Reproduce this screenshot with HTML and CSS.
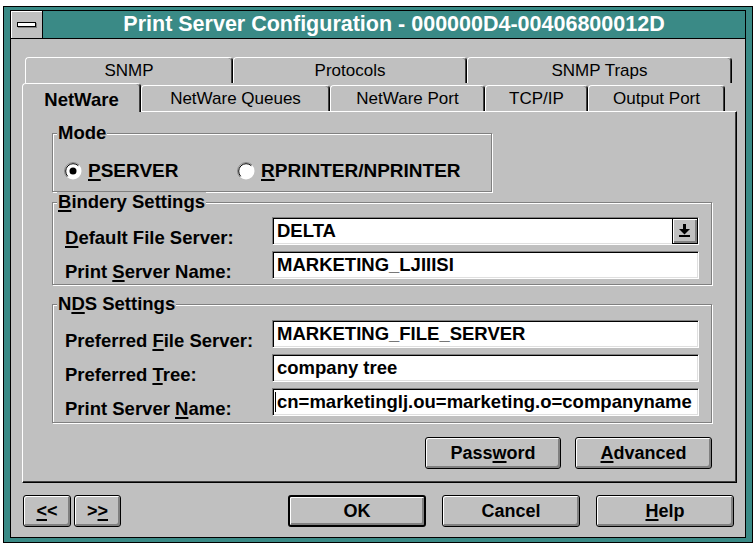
FILE: index.html
```
<!DOCTYPE html>
<html lang="en">

<head>
    <meta charset="UTF-8">
    <title>Print Server Configuration</title>
    <link rel="stylesheet" href="styles.css">
</head>

<body>
    <div class="window">
        <div class="titlebar">
            <div class="sysmenu"><span class="sysbar"></span></div>
            <div class="caption">Print Server Configuration - 000000D4-00406800012D</div>
        </div>

        <div class="client">
            <div class="tabs-back">
                <div class="tab t-snmp">SNMP</div>
                <div class="tab t-proto">Protocols</div>
                <div class="tab t-traps">SNMP Traps</div>
            </div>
            <div class="tabs-front">
                <div class="tab active t-netware">NetWare</div>
                <div class="tab t-queues">NetWare Queues</div>
                <div class="tab t-port">NetWare Port</div>
                <div class="tab t-tcp">TCP/IP</div>
                <div class="tab t-output">Output Port</div>
            </div>

            <div class="panel">
                <div class="group mode">
                    <div class="legend">Mode</div>
                    <div class="radios">
                        <div class="radio first">
                            <svg class="rb" viewBox="0 0 18 18"><circle cx="9" cy="9" r="8.5" fill="#fff"/><path d="M2.99 15.01 A8.5 8.5 0 0 1 15.01 2.99" fill="none" stroke="#808080"/><path d="M3.7 14.3 A7.5 7.5 0 0 1 14.3 3.7" fill="none" stroke="#000"/><circle cx="9" cy="9" r="3.5" fill="#000"/></svg>
                            <span><u>P</u>SERVER</span>
                        </div>
                        <div class="radio">
                            <svg class="rb" viewBox="0 0 18 18"><circle cx="9" cy="9" r="8.5" fill="#fff"/><path d="M2.99 15.01 A8.5 8.5 0 0 1 15.01 2.99" fill="none" stroke="#808080"/><path d="M3.7 14.3 A7.5 7.5 0 0 1 14.3 3.7" fill="none" stroke="#000"/></svg>
                            <span><u>R</u>PRINTER/NPRINTER</span>
                        </div>
                    </div>
                </div>

                <div class="group bindery">
                    <div class="legend"><u>B</u>indery Settings</div>
                    <div class="rows">
                        <div class="lbl"><u>D</u>efault File Server:</div>
                        <div class="field combo">
                            <span>DELTA</span>
                            <span class="drop"><svg width="11" height="13" viewBox="0 0 11 13"><rect x="4" y="0" width="3" height="5"/><path d="M0 5 H11 L5.5 10.5 Z"/><rect x="0" y="11" width="11" height="2"/></svg></span>
                        </div>
                        <div class="lbl">Print <u>S</u>erver Name:</div>
                        <div class="field">MARKETING_LJIIISI</div>
                    </div>
                </div>

                <div class="group nds">
                    <div class="legend">N<u>D</u>S Settings</div>
                    <div class="rows">
                        <div class="lbl">Preferred <u>F</u>ile Server:</div>
                        <div class="field">MARKETING_FILE_SERVER</div>
                        <div class="lbl">Preferred <u>T</u>ree:</div>
                        <div class="field">company tree</div>
                        <div class="lbl">Print Server <u>N</u>ame:</div>
                        <div class="field focus"><span class="caret"></span>cn=marketinglj.ou=marketing.o=companyname</div>
                    </div>
                </div>

                <div class="page-buttons">
                    <div class="btn b-pass">Pass<u>w</u>ord</div>
                    <div class="btn b-adv"><u>A</u>dvanced</div>
                </div>
            </div>

            <div class="footer">
                <div class="nav">
                    <div class="btn b-prev"><u>&lt;</u>&lt;</div>
                    <div class="btn b-next">&gt;<u>&gt;</u></div>
                </div>
                <div class="actions">
                    <div class="btn default">OK</div>
                    <div class="btn">Cancel</div>
                    <div class="btn"><u>H</u>elp</div>
                </div>
            </div>
        </div>
    </div>
</body>

</html>
```

FILE: styles.css
```
* {
    margin: 0;
    padding: 0;
    box-sizing: border-box;
}

body {
    background: #fff;
    font-family: "Liberation Sans", Arial, sans-serif;
    color: #000;
}

u {
    text-decoration-thickness: 2px;
    text-underline-offset: 2px;
}

.window {
    margin: 6px 0 0 3px;
    width: 750px;
    height: 537px;
    border: 1px solid #000;
    background: #3a8a86;
    padding: 3px 6px 4px 6px;
}

.titlebar {
    display: flex;
    height: 29px;
    border: 1px solid #000;
    background: #3a8a86;
}

.sysmenu {
    width: 32px;
    border-right: 1px solid #000;
    background: #c0c0c0;
    box-shadow: inset 1px 1px #fff;
    display: flex;
    align-items: center;
    justify-content: center;
}

.sysbar {
    width: 19px;
    height: 5px;
    border: 1px solid #000;
    background: #fff;
    box-shadow: 1px 1px #808080;
}

.caption {
    flex: 1;
    color: #fff;
    font-weight: bold;
    font-size: 21.5px;
    line-height: 27px;
    text-align: center;
}

.client {
    height: 499px;
    background: #c0c0c0;
    border: 1px solid #000;
    border-top: 0;
    padding-top: 18px;
}

/* tabs */

.tabs-back {
    display: flex;
    margin-left: 14px;
    height: 26px;
}

.tabs-front {
    display: flex;
    align-items: flex-end;
    margin-left: 11px;
    height: 28px;
}

.tab {
    height: 26px;
    border-top: 1px solid #fff;
    border-left: 1px solid #fff;
    border-right: 1px solid #000;
    box-shadow: inset -1px 0 #404040;
    border-radius: 4px 4px 0 0;
    background: #c0c0c0;
    font-size: 17px;
    display: flex;
    align-items: center;
    justify-content: center;
}

.tab.active {
    height: 29px;
    margin-bottom: -1px;
    padding-top: 3px;
    position: relative;
    z-index: 1;
    font-weight: bold;
    font-size: 18.5px;
}

.t-snmp { width: 208px; }
.t-proto { width: 234px; }
.t-traps { width: 265px; }
.t-netware { width: 119px; }
.t-queues { width: 189px; }
.t-port { width: 155px; }
.t-tcp { width: 103px; }
.t-output { width: 137px; }

.panel {
    margin-left: 11px;
    width: 715px;
    height: 372px;
    border-top: 1px solid #fff;
    border-left: 1px solid #fff;
    border-right: 1px solid #000;
    border-bottom: 1px solid #000;
    box-shadow: inset -1px -1px #404040;
    padding: 21px 0 0 29px;
}

/* group boxes */

.group {
    width: 660px;
    border: 1px solid #808080;
    box-shadow: inset 1px 1px #fff, 1px 1px #fff;
    padding: 0 12px 0 4px;
    font-weight: bold;
    font-size: 18.5px;
}

.legend {
    width: fit-content;
    margin-top: -11px;
    padding: 0 1px;
    line-height: 20px;
    background: #c0c0c0;
}

.mode {
    width: 440px;
    padding-bottom: 9px;
}

.bindery {
    margin-top: 10px;
    padding-bottom: 5px;
}

.bindery .rows {
    margin-top: 5px;
}

.nds {
    margin-top: 19px;
    padding-bottom: 6px;
}

.nds .rows {
    margin-top: 6px;
}

.radios {
    display: flex;
    margin: 17px 0 0 7px;
    height: 22px;
    align-items: center;
}

.radio {
    display: flex;
    align-items: center;
    gap: 6px;
    font-size: 19px;
}

.radio.first {
    width: 173px;
}

.rb {
    width: 18px;
    height: 18px;
}

.rows {
    display: grid;
    grid-template-columns: 207px 427px;
    row-gap: 6px;
    margin-left: 8px;
}

.lbl {
    height: 28px;
    padding-top: 11px;
    line-height: 20px;
    white-space: nowrap;
}

.field {
    height: 28px;
    background: #fff;
    border: 1px solid;
    border-color: #808080 #fff #fff #808080;
    box-shadow: inset 1px 1px #000, inset -1px -1px #dfdfdf;
    padding-left: 4px;
    display: flex;
    align-items: center;
    white-space: nowrap;
}

.field.focus {
    padding-left: 2px;
}

.caret {
    width: 1px;
    height: 20px;
    background: #000;
    margin-right: 1px;
}

.combo {
    justify-content: space-between;
}

.drop {
    width: 26px;
    height: 26px;
    border: 1px solid #000;
    background: #c0c0c0;
    box-shadow: inset 1px 1px #fff, inset -2px -2px #808080;
    display: flex;
    align-items: center;
    justify-content: center;
    padding: 0 1px 1px 0;
}

/* buttons */

.btn {
    height: 32px;
    width: 138px;
    border: 1px solid #000;
    border-radius: 3px;
    background: #c0c0c0;
    box-shadow: inset 1px 1px #fff, inset -2px -2px #808080;
    font-weight: bold;
    font-size: 18px;
    display: flex;
    align-items: center;
    justify-content: center;
}

.btn.default {
    border-width: 2px;
}

.page-buttons {
    display: flex;
    justify-content: flex-end;
    gap: 14px;
    width: 660px;
    margin-top: 14px;
}

.b-pass { width: 136px; }
.b-adv { width: 137px; }

.footer {
    display: flex;
    justify-content: space-between;
    margin-top: 12px;
    padding: 0 11px 0 12px;
}

.nav {
    display: flex;
    gap: 3px;
}

.b-prev { width: 48px; }
.b-next { width: 47px; }

.actions {
    display: flex;
    gap: 16px;
}
```
